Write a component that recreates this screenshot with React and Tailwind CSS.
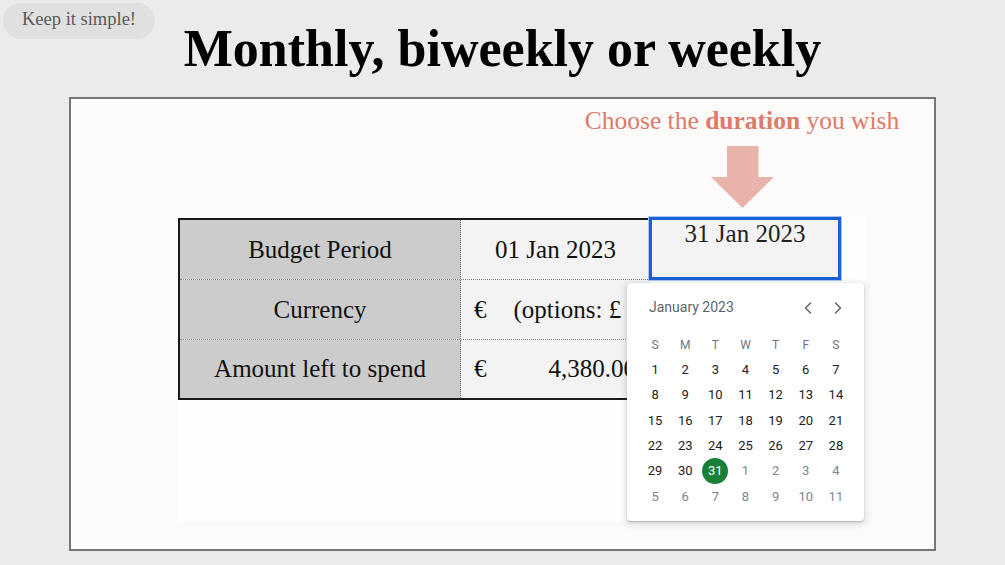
import React from 'react';
import {ChevronLeft, ChevronRight} from 'lucide-react';

const weeks = [
    [[1], [2], [3], [4], [5], [6], [7]],
    [[8], [9], [10], [11], [12], [13], [14]],
    [[15], [16], [17], [18], [19], [20], [21]],
    [[22], [23], [24], [25], [26], [27], [28]],
    [[29], [30], [31, 'sel'], [1, 'out'], [2, 'out'], [3, 'out'], [4, 'out']],
    [[5, 'out'], [6, 'out'], [7, 'out'], [8, 'out'], [9, 'out'], [10, 'out'], [11, 'out']],
];

const DayCell = ({day, kind}) => {
    if (kind === 'sel') {
        return (
            <div className="flex items-center justify-center h-[25.3px]">
                <span className="w-[26px] h-[26px] rounded-full bg-[#188038] text-white text-[13px] flex items-center justify-center">
                    {day}
                </span>
            </div>
        );
    }
    const color = kind === 'out' ? 'text-[#80868b]' : 'text-[#202124]';
    return (
        <div className={`flex items-center justify-center h-[25.3px] text-[13px] ${color}`}>
            {day}
        </div>
    );
};

// popup du sélecteur de date (style google sheets)
const DatePicker = () => {
    return (
        <div className="absolute left-[449px] top-[65px] w-[237px] h-[238px] bg-white rounded-[4px] shadow-[0_1px_2px_rgba(60,64,67,0.3),0_2px_6px_2px_rgba(60,64,67,0.15)] font-['Roboto',sans-serif]">
            <div className="h-[49px] flex items-center pl-[22px] pr-[11px]">
                <span className="flex-1 text-[14px] text-[#5f6368]">January 2023</span>
                <div className="w-[30px] flex justify-center text-[#5f6368]">
                    <ChevronLeft size={20} strokeWidth={1.8}/>
                </div>
                <div className="w-[30px] flex justify-center text-[#5f6368]">
                    <ChevronRight size={20} strokeWidth={1.8}/>
                </div>
            </div>
            <div className="px-[13px] grid grid-cols-7">
                {['S', 'M', 'T', 'W', 'T', 'F', 'S'].map((d, i) => (
                    <div key={i} className="h-[25.3px] flex items-center justify-center text-[12px] text-[#70757a]">
                        {d}
                    </div>
                ))}
                {weeks.map((week, wi) => week.map(([day, kind], di) => (
                    <DayCell key={`${wi}-${di}`} day={day} kind={kind}/>
                )))}
            </div>
        </div>
    );
};

export default function App() {
    return (
        <div className="w-full h-[565px] bg-[#ebebeb] font-['Liberation_Serif','Times_New_Roman',serif] overflow-hidden">
            <header className="h-[97px] grid grid-cols-[1fr_auto_1fr]">
                <div className="pt-[3px] pl-[3px]">
                    <div className="w-[152px] h-[36px] rounded-full bg-[#e0e0e0] text-[#595959] text-[18.5px] flex items-center justify-center pb-[3px]">
                        Keep it simple!
                    </div>
                </div>
                <h1 className="pt-[23px] text-[52px] leading-none font-bold text-black whitespace-nowrap">
                    Monthly, biweekly or weekly
                </h1>
                <div/>
            </header>

            <main className="mx-[69px] h-[454px] border-2 border-[#767676] bg-[#fcfbf9]">
                <div className="ml-[514px] w-[314px] pt-[9px] flex flex-col items-center">
                    <p className="text-[25.5px] leading-none text-[#dc7a6c] whitespace-nowrap">
                        Choose the <b>duration</b> you wish
                    </p>
                    <svg width="63" height="62" viewBox="0 0 63 62" className="mt-[12.5px]">
                        <rect x="16" y="0" width="31.5" height="31" fill="#e8b3ab"/>
                        <polygon points="0,31 63,31 31.5,62" fill="#e8b3ab"/>
                    </svg>
                </div>

                <div className="relative mt-[10px] ml-[107px] w-[688px] h-[303px] bg-[#fffefc]">
                    <div className="flex items-start">
                        <div className="w-[472px] shrink-0 border-2 border-r-0 border-[#1a1a1a] text-[25px] text-[#111]">
                            <div className="flex h-[60px] border-b border-dotted border-[#777]">
                                <div className="w-[281px] shrink-0 bg-[#cccccc] border-r border-dotted border-[#777] flex items-center justify-center">Budget Period</div>
                                <div className="flex-1 min-w-0 bg-[#f3f3f3] flex items-center justify-center">01 Jan 2023</div>
                            </div>
                            <div className="flex h-[60px] border-b border-dotted border-[#777]">
                                <div className="w-[281px] shrink-0 bg-[#cccccc] border-r border-dotted border-[#777] flex items-center justify-center">Currency</div>
                                <div className="flex-1 min-w-0 bg-[#f3f3f3] flex items-center pl-[13px] whitespace-nowrap">
                                    <span>€</span>
                                    <span className="ml-[27px]">(options: £</span>
                                </div>
                            </div>
                            <div className="flex h-[58px]">
                                <div className="w-[281px] shrink-0 bg-[#cccccc] border-r border-dotted border-[#777] flex items-center justify-center">Amount left to spend</div>
                                <div className="flex-1 min-w-0 bg-[#f3f3f3] flex items-center pl-[13px] pr-[14px]">
                                    <span>€</span>
                                    <span className="flex-1 text-right">4,380.00</span>
                                </div>
                            </div>
                        </div>
                        <div className="-ml-[1px] -mt-[1px] w-[192px] h-[63px] shrink-0 border-[3px] border-[#1a5fd6] shadow-[0_0_0_1px_#a8c5f5] bg-[#f3f3f3] flex justify-center pt-[1px] text-[25px] leading-none text-[#222]">
                            31 Jan 2023
                        </div>
                    </div>
                    <DatePicker/>
                </div>
            </main>
        </div>
    );
}
